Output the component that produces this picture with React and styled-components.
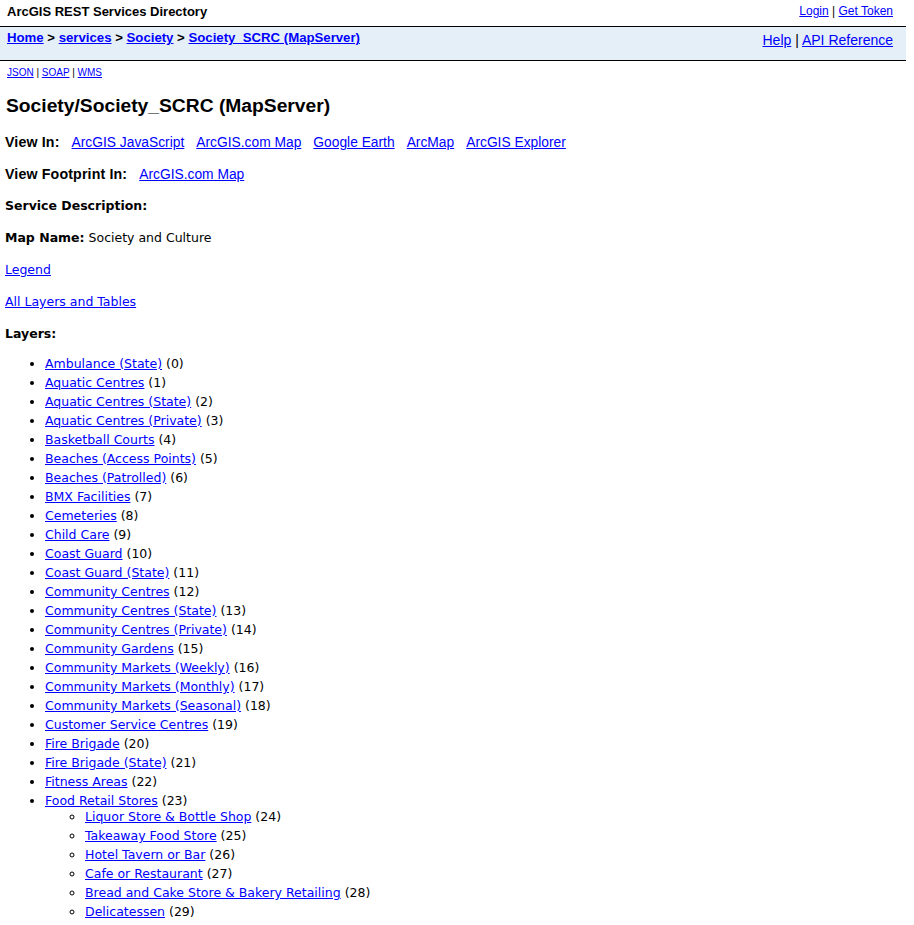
import React from "react";
import styled, { createGlobalStyle } from "styled-components";

const layers = [
  "Ambulance (State)",
  "Aquatic Centres",
  "Aquatic Centres (State)",
  "Aquatic Centres (Private)",
  "Basketball Courts",
  "Beaches (Access Points)",
  "Beaches (Patrolled)",
  "BMX Facilities",
  "Cemeteries",
  "Child Care",
  "Coast Guard",
  "Coast Guard (State)",
  "Community Centres",
  "Community Centres (State)",
  "Community Centres (Private)",
  "Community Gardens",
  "Community Markets (Weekly)",
  "Community Markets (Monthly)",
  "Community Markets (Seasonal)",
  "Customer Service Centres",
  "Fire Brigade",
  "Fire Brigade (State)",
  "Fitness Areas",
];

const foodLayers = [
  "Liquor Store & Bottle Shop",
  "Takeaway Food Store",
  "Hotel Tavern or Bar",
  "Cafe or Restaurant",
  "Bread and Cake Store & Bakery Retailing",
  "Delicatessen",
];

const viewIn = [
  "ArcGIS JavaScript",
  "ArcGIS.com Map",
  "Google Earth",
  "ArcMap",
  "ArcGIS Explorer",
];

const App = () => {
  return (
    <>
      <GlobalStyle />
      <Header>
        <TopRow>
          <Title>ArcGIS REST Services Directory</Title>
          <UserLinks>
            <a href="#">Login</a> | <a href="#">Get Token</a>
          </UserLinks>
        </TopRow>
        <NavBar>
          <Crumbs>
            <a href="#">Home</a> &gt; <a href="#">services</a> &gt;{" "}
            <a href="#">Society</a> &gt; <a href="#">Society_SCRC (MapServer)</a>
          </Crumbs>
          <HelpLinks>
            <a href="#">Help</a> | <a href="#">API Reference</a>
          </HelpLinks>
        </NavBar>
      </Header>
      <Formats>
        <a href="#">JSON</a> | <a href="#">SOAP</a> | <a href="#">WMS</a>
      </Formats>
      <Content>
        <Heading>Society/Society_SCRC (MapServer)</Heading>
        <ViewRow>
          <ViewLabel>View In:</ViewLabel>
          <LinkRow>
            {viewIn.map((v) => (
              <a key={v} href="#">
                {v}
              </a>
            ))}
          </LinkRow>
        </ViewRow>
        <ViewRow>
          <ViewLabel>View Footprint In:</ViewLabel>
          <LinkRow>
            <a href="#">ArcGIS.com Map</a>
          </LinkRow>
        </ViewRow>
        <Para>
          <b>Service Description:</b>
        </Para>
        <Para>
          <b>Map Name:</b> Society and Culture
        </Para>
        <Para>
          <a href="#">Legend</a>
        </Para>
        <Para>
          <a href="#">All Layers and Tables</a>
        </Para>
        <Para>
          <b>Layers:</b>
        </Para>
        <LayerList>
          {layers.map((name, i) => (
            <Layer key={name}>
              <a href="#">{name}</a> ({i})
            </Layer>
          ))}
          <Layer>
            <a href="#">Food Retail Stores</a> (23)
            <SubList>
              {foodLayers.map((name, i) => (
                <Layer key={name}>
                  <a href="#">{name}</a> ({i + 24})
                </Layer>
              ))}
            </SubList>
          </Layer>
        </LayerList>
      </Content>
    </>
  );
};

export default App;

const GlobalStyle = createGlobalStyle`
  body {
    margin: 0;
    background: #fff;
    color: #000;
    font-family: "DejaVu Sans", Verdana, sans-serif;
    font-size: 12.5px;
  }
  a {
    color: #0000ff;
    text-decoration: underline;
  }
`;

const Header = styled.div`
  width: 906px;
  font-family: "Liberation Sans", Arial, sans-serif;
`;

const TopRow = styled.div`
  display: flex;
  justify-content: space-between;
  align-items: flex-start;
  height: 26px;
  padding: 0 13px 0 7px;
  box-sizing: border-box;
`;

const Title = styled.div`
  font-weight: bold;
  font-size: 13px;
  line-height: 15px;
  padding-top: 4px;
`;

const UserLinks = styled.div`
  font-size: 12px;
  line-height: 14px;
  padding-top: 4px;
`;

const NavBar = styled.div`
  display: flex;
  justify-content: space-between;
  align-items: flex-start;
  height: 33px;
  background: #e5eff7;
  border-top: 1px solid #000;
  border-bottom: 1px solid #000;
  padding: 0 13px 0 7px;
`;

const Crumbs = styled.div`
  font-weight: bold;
  font-size: 13.2px;
  line-height: 15px;
  padding-top: 3px;
`;

const HelpLinks = styled.div`
  font-size: 14px;
  line-height: 16px;
  padding-top: 5px;
`;

const Formats = styled.div`
  font-family: "Liberation Sans", Arial, sans-serif;
  font-size: 10px;
  line-height: 12px;
  padding: 6px 7px 0;
`;

const Content = styled.div`
  padding: 0 5px;
`;

const Heading = styled.h2`
  font-family: "Liberation Sans", Arial, sans-serif;
  font-size: 19.25px;
  line-height: 22px;
  font-weight: bold;
  margin: 16px 0 17px 1px;
`;

const Para = styled.div`
  display: flex;
  align-items: baseline;
  height: 16px;
  line-height: 16px;
  margin: 0 0 16px;
  white-space: pre;
`;

const ViewRow = styled(Para)`
  font-family: "Liberation Sans", Arial, sans-serif;
  font-size: 13.8px;
`;

const ViewLabel = styled.b`
  font-size: 14.2px;
  line-height: 16px;
  letter-spacing: 0.15px;
`;

const LinkRow = styled.span`
  display: inline-flex;
  gap: 12px;
  margin-left: 12px;
  line-height: 16px;
`;

const LayerList = styled.ul`
  margin: -2px 0 0;
  padding-left: 40px;
  list-style: disc;
`;

const SubList = styled.ul`
  margin: 0;
  padding-left: 40px;
  list-style: circle;
`;

const Layer = styled.li`
  line-height: 16px;
  padding-bottom: 3px;
`;
